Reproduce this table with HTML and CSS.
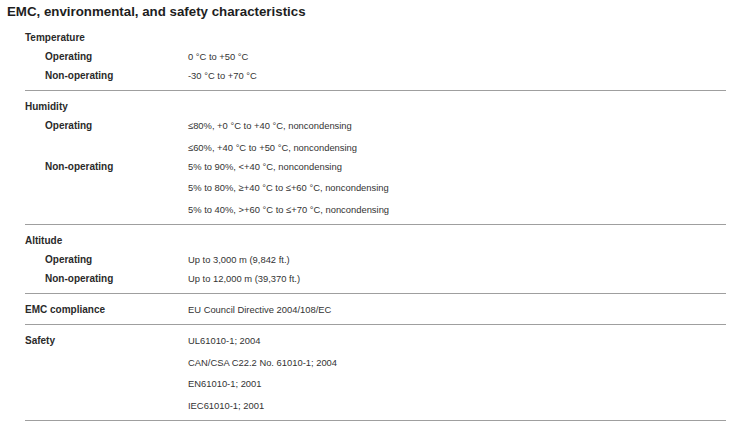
FILE: index.html
```html
<!DOCTYPE html>
<html>
<head>
<meta charset="utf-8">
<link rel="stylesheet" href="styles.css">
</head>
<body>
<div class="sheet">
  <h1 class="title">EMC, environmental, and safety characteristics</h1>
  <div class="table">
    <section class="group first">
      <div class="row"><div class="label">Temperature</div><div class="vals"></div></div>
      <div class="row"><div class="label sub">Operating</div><div class="vals"><p>0 °C to +50 °C</p></div></div>
      <div class="row"><div class="label sub">Non-operating</div><div class="vals"><p>-30 °C to +70 °C</p></div></div>
    </section>
    <section class="group">
      <div class="row"><div class="label">Humidity</div><div class="vals"></div></div>
      <div class="row"><div class="label sub">Operating</div><div class="vals"><p>≤80%, +0 °C to +40 °C, noncondensing</p><p>≤60%, +40 °C to +50 °C, noncondensing</p></div></div>
      <div class="row"><div class="label sub">Non-operating</div><div class="vals"><p>5% to 90%, &lt;+40 °C, noncondensing</p><p>5% to 80%, ≥+40 °C to ≤+60 °C, noncondensing</p><p>5% to 40%, &gt;+60 °C to ≤+70 °C, noncondensing</p></div></div>
    </section>
    <section class="group">
      <div class="row"><div class="label">Altitude</div><div class="vals"></div></div>
      <div class="row"><div class="label sub">Operating</div><div class="vals"><p>Up to 3,000 m (9,842 ft.)</p></div></div>
      <div class="row"><div class="label sub">Non-operating</div><div class="vals"><p>Up to 12,000 m (39,370 ft.)</p></div></div>
    </section>
    <section class="group">
      <div class="row"><div class="label">EMC compliance</div><div class="vals"><p>EU Council Directive 2004/108/EC</p></div></div>
    </section>
    <section class="group">
      <div class="row"><div class="label">Safety</div><div class="vals"><p>UL61010-1; 2004</p><p>CAN/CSA C22.2 No. 61010-1; 2004</p><p>EN61010-1; 2001</p><p>IEC61010-1; 2001</p></div></div>
    </section>
  </div>
</div>
</body>
</html>
```
FILE: styles.css
```css
html, body {
  margin: 0;
  padding: 0;
  background: #ffffff;
}
body {
  font-family: "Liberation Sans", Arial, sans-serif;
  color: #222222;
}
.sheet {
  width: 729px;
}
.title {
  margin: 0;
  padding-left: 7px;
  font-size: 13.3px;
  font-weight: bold;
  line-height: 24px;
  color: #1e1e1e;
}
.table {
  margin-left: 25px;
  width: 701px;
}
.group {
  padding: 6px 0 5px;
  border-bottom: 1px solid #9f9f9f;
}
.group.first {
  padding-top: 4px;
}
.row {
  display: grid;
  grid-template-columns: 163px 1fr;
  line-height: 19px;
}
.label {
  font-size: 10px;
  font-weight: bold;
  color: #2a2a2a;
  min-height: 19px;
}
.label.sub {
  padding-left: 20px;
}
.vals p {
  margin: 0;
  font-size: 9.4px;
  color: #333333;
}
.vals p + p {
  margin-top: 2.67px;
}
```
